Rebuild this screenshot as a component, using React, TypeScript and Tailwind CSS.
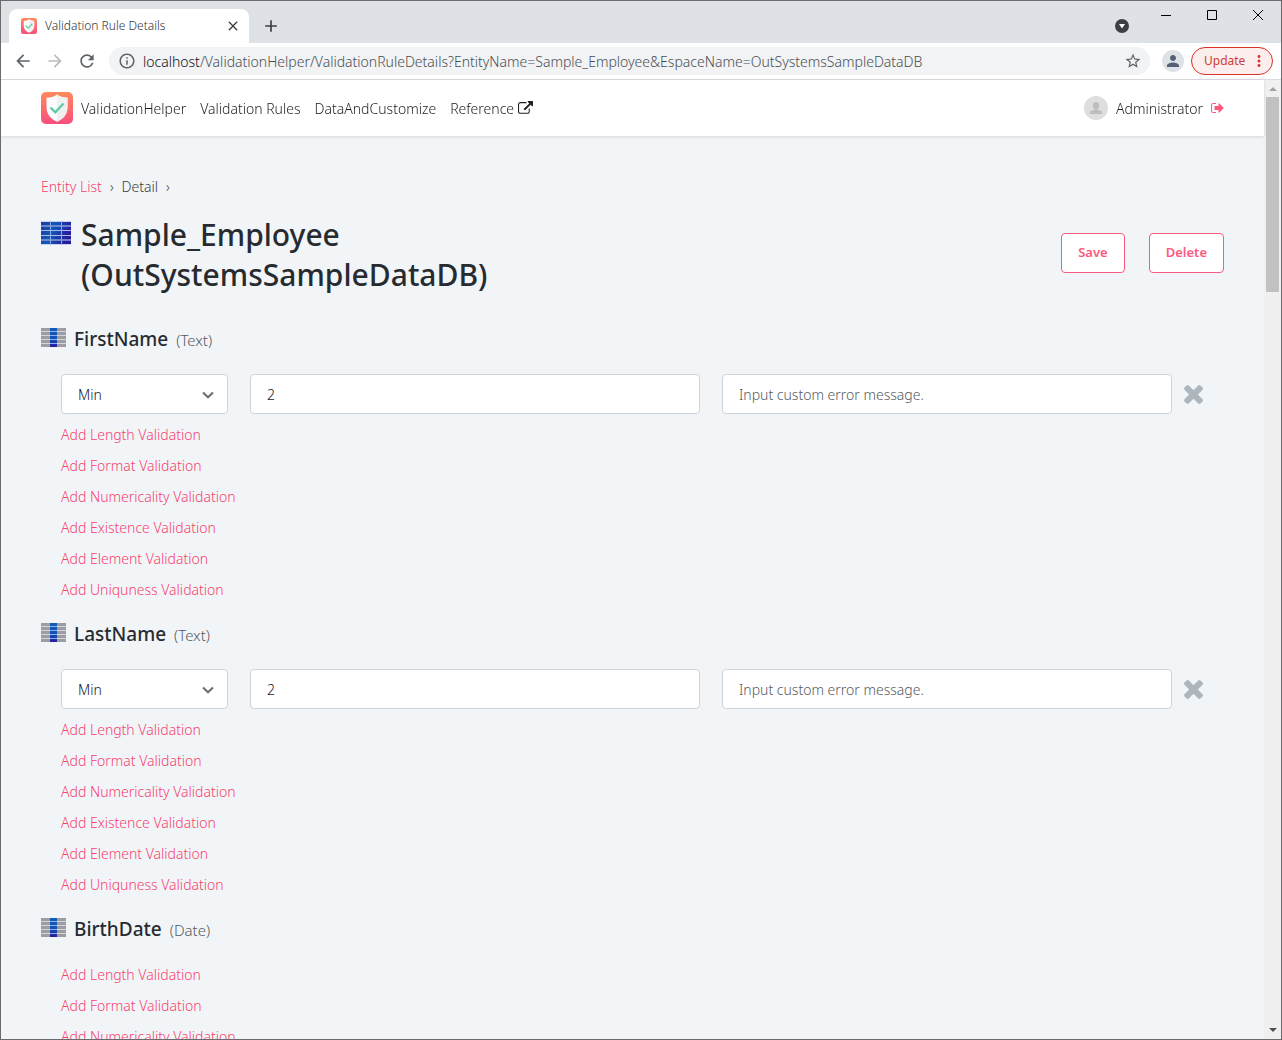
import type { ReactNode } from "react";
import { MdArrowBack, MdArrowForward, MdRefresh, MdInfoOutline, MdStarBorder, MdPerson, MdMoreVert, MdClose, MdAdd } from "react-icons/md";

const ADD_LINKS = ["Length", "Format", "Numericality", "Existence", "Element", "Uniquness"];

const ATTRIBUTES = [
  { name: "FirstName", type: "Text", hasRule: true },
  { name: "LastName", type: "Text", hasRule: true },
  { name: "BirthDate", type: "Date", hasRule: false },
];

function ShieldLogo({ id, className }: { id: string; className: string }) {
  return (
    <svg viewBox="0 0 32 32" className={className} aria-hidden="true">
      <defs>
        <linearGradient id={id} x1="0" y1="0" x2="0" y2="1">
          <stop offset="0" stopColor="#ff8a5c" />
          <stop offset="1" stopColor="#f74f7d" />
        </linearGradient>
      </defs>
      <rect width="32" height="32" rx="5" fill={`url(#${id})`} />
      <path d="M16 2.500C13 4.700 9.500 5.600 5.500 5.800V15c0 7 4 12 10.500 14.700C22.500 27 26.500 22 26.500 15V5.800C22.500 5.600 19 4.700 16 2.500z" fill="#fcfcfc" />
      <path d="M16 2.500v27.200C22.500 27 26.500 22 26.500 15V5.800C22.500 5.600 19 4.700 16 2.500z" fill="#f0f0f0" />
      <path d="M9.500 15.500l4.800 4.800L22.500 11.500" fill="none" stroke="#5fcbaa" strokeWidth="2.400" />
    </svg>
  );
}

function EntityIcon() {
  return (
    <svg viewBox="0 0 30 24" className="mt-[6px] h-6 w-[30px] shrink-0" aria-hidden="true">
      <defs>
        <linearGradient id="entity" x1="0" y1="0" x2="1" y2="0.3">
          <stop offset="0" stopColor="#2038a4" />
          <stop offset="0.45" stopColor="#0f58ba" />
          <stop offset="1" stopColor="#2a1a9c" />
        </linearGradient>
      </defs>
      <rect width="30" height="22" y="1" fill="url(#entity)" />
      <path d="M0 .500h30M0 23.500h30" stroke="#c9d3ea" />
      <path d="M0 5h30M0 19h30" stroke="#7d98d6" strokeWidth="2" opacity="0.8" />
      <path d="M0 9.500h30M0 14.500h30" stroke="#a9bde6" />
      <path d="M9.500 0v24M20.500 0v24" stroke="#8ea9de" />
    </svg>
  );
}

function AttributeIcon() {
  return (
    <svg viewBox="0 0 25 19" className="mt-[3px] h-[19px] w-[25px] shrink-0" aria-hidden="true">
      <defs>
        <linearGradient id="attribute" x1="0" y1="0" x2="0" y2="1">
          <stop offset="0" stopColor="#0f5cbc" />
          <stop offset="0.6" stopColor="#0f50b8" />
          <stop offset="1" stopColor="#2a1a9c" />
        </linearGradient>
      </defs>
      <rect width="25" height="19" fill="#9c9ca3" />
      <rect x="9" width="7" height="19" fill="url(#attribute)" />
      <path d="M0 3.500h9M0 7.500h9M0 11.500h9M0 15.500h9M16 3.500h9M16 7.500h9M16 11.500h9M16 15.500h9" stroke="#d4d6db" />
      <path d="M9 3.500h7M9 7.500h7M9 11.500h7M9 15.500h7" stroke="#8fb0e4" />
    </svg>
  );
}

function ExternalLinkIcon() {
  return (
    <svg viewBox="0 0 1792 1792" className="size-[15px]" fill="currentColor" aria-hidden="true">
      <path d="M1408 928v320q0 119-84.500 203.500t-203.500 84.500h-832q-119 0-203.500-84.500t-84.500-203.500v-832q0-119 84.500-203.500t203.500-84.500h704q14 0 23 9t9 23v64q0 14-9 23t-23 9h-704q-66 0-113 47t-47 113v832q0 66 47 113t113 47h832q66 0 113-47t47-113v-320q0-14 9-23t23-9h64q14 0 23 9t9 23zm384-864v512q0 26-19 45t-45 19-45-19l-176-176-652 652q-10 10-23 10t-23-10l-114-114q-10-10-10-23t10-23l652-652-176-176q-19-19-19-45t19-45 45-19h512q26 0 45 19t19 45z" />
    </svg>
  );
}

function SignOutIcon() {
  return (
    <svg viewBox="0 128 1664 1536" className="h-3 w-[13px]" fill="currentColor" aria-hidden="true">
      <path d="M640 1440v96h-352q-119 0-203.500-84.500t-84.500-203.500v-704q0-119 84.500-203.500t203.500-84.500h352v128h-352q-66 0-113 47t-47 113v704q0 66 47 113t113 47h352zm992-544q0 26-19 45l-544 544q-19 19-45 19t-45-19-19-45v-288h-448q-26 0-45-19t-19-45v-384q0-26 19-45t45-19h448v-288q0-26 19-45t45-19 45 19l544 544q19 19 19 45z" />
    </svg>
  );
}

function CrossIcon() {
  return (
    <svg viewBox="302 366 1188 1188" className="size-[19px]" fill="currentColor" aria-hidden="true">
      <path d="M1490 1322q0 40-28 68l-136 136q-28 28-68 28t-68-28l-294-294-294 294q-28 28-68 28t-68-28l-136-136q-28-28-28-68t28-68l294-294-294-294q-28-28-28-68t28-68l136-136q28-28 68-28t68 28l294 294 294-294q28-28 68-28t68 28l136 136q28 28 28 68t-28 68l-294 294 294 294q28 28 28 68z" />
    </svg>
  );
}

function TabStrip() {
  return (
    <div className="flex h-[42px] shrink-0 items-start bg-[#dee1e6]">
      <div className="mt-2 ml-2 flex h-[34px] w-60 items-center rounded-t-lg bg-white pr-2 pl-3">
        <ShieldLogo id="favicon" className="size-4" />
        <span className="ml-2 flex-1 text-[12px] text-[#303438]">Validation Rule Details</span>
        <button aria-label="Close tab" className="text-[#3c4043]">
          <MdClose className="size-4" />
        </button>
      </div>
      <button aria-label="New tab" className="mt-[15px] ml-3 text-[#3c4043]">
        <MdAdd className="size-5" />
      </button>
      <div className="ml-auto flex items-start text-black">
        <button aria-label="Search tabs" className="mt-[18px] mr-[14px]">
          <svg viewBox="0 0 14 14" className="size-[14px]">
            <circle cx="7" cy="7" r="7" fill="#3c4043" />
            <path d="M4 5h6L7 9.500z" fill="#fff" />
          </svg>
        </button>
        <button aria-label="Minimize" className="flex h-7 w-[46px] items-center justify-center">
          <svg viewBox="0 0 10 10" className="size-[10px]"><path d="M0 5.500h10" stroke="currentColor" /></svg>
        </button>
        <button aria-label="Maximize" className="flex h-7 w-[46px] items-center justify-center">
          <svg viewBox="0 0 10 10" className="size-[10px]"><path d="M.5.5h9v9h-9z" fill="none" stroke="currentColor" /></svg>
        </button>
        <button aria-label="Close window" className="flex h-7 w-[46px] items-center justify-center">
          <svg viewBox="0 0 10 10" className="size-[10px]"><path d="M0 0l10 10M10 0L0 10" stroke="currentColor" /></svg>
        </button>
      </div>
    </div>
  );
}

function Toolbar() {
  return (
    <div className="flex h-[37px] shrink-0 items-center border-b border-[#d9dbde] bg-white pr-2 pl-3 text-[#5f6368]">
      <button aria-label="Back"><MdArrowBack className="size-5" /></button>
      <button aria-label="Forward" className="ml-3 text-[#babcbe]"><MdArrowForward className="size-5" /></button>
      <button aria-label="Reload" className="ml-3"><MdRefresh className="size-5" /></button>
      <div className="ml-3 flex h-7 min-w-0 flex-1 items-center rounded-full bg-[#f1f3f4] pr-2 pl-[9px]">
        <MdInfoOutline className="size-[18px] shrink-0" />
        <span className="ml-[7px] min-w-0 flex-1 text-[14px] whitespace-nowrap text-[#4b4f54]">
          <span className="text-[#101114]">localhost</span>/ValidationHelper/ValidationRuleDetails?EntityName=Sample_Employee&amp;EspaceName=OutSystemsSampleDataDB
        </span>
        <button aria-label="Bookmark this page"><MdStarBorder className="size-[18px]" /></button>
      </div>
      <button aria-label="Profile" className="ml-3 flex size-[22px] items-center justify-center rounded-full bg-[#dee1e6] text-[#535f75]">
        <MdPerson className="size-[18px]" />
      </button>
      <button className="ml-[7px] flex h-7 w-[82px] items-center justify-between rounded-full border border-[#d93025] bg-[#fceeed] pr-1 pl-3 text-[12px] font-normal text-[#d03c33]">
        Update
        <MdMoreVert className="size-[18px]" />
      </button>
    </div>
  );
}

function AppHeader() {
  return (
    <header className="relative flex h-14 shrink-0 items-center bg-white px-10 text-[14px] text-[#1c1f23] shadow-[0_1px_3px_rgba(0,0,0,0.12)]">
      <ShieldLogo id="logo" className="size-8" />
      <nav className="ml-2 flex items-center gap-3.5">
        <a href="#home">ValidationHelper</a>
        <a href="#rules">Validation Rules</a>
        <a href="#data">DataAndCustomize</a>
        <a href="#reference" className="flex items-center gap-1">
          Reference <ExternalLinkIcon />
        </a>
      </nav>
      <div className="ml-auto flex items-center">
        <svg viewBox="0 0 24 24" className="size-6" aria-hidden="true">
          <circle cx="12" cy="12" r="12" fill="#dedede" />
          <path d="M12 6c2 0 3.200 1.500 3.200 3.400 0 1.600-.8 2.700-1.700 3.400v1l4.500 1.500V18H6v-2.700l4.500-1.500v-1c-.9-.7-1.700-1.800-1.700-3.400C8.800 7.500 10 6 12 6z" fill="#bdbdbd" />
        </svg>
        <span className="ml-2">Administrator</span>
        <a href="#logout" aria-label="Log out" className="ml-2 text-[#fe5780]"><SignOutIcon /></a>
      </div>
    </header>
  );
}

function OutlineButton({ children }: { children: ReactNode }) {
  return (
    <button className="h-10 rounded border border-[#fa5a80] bg-white px-4 text-[13px] font-semibold text-[#fa5a80]">
      {children}
    </button>
  );
}

function RuleRow({ attribute }: { attribute: string }) {
  const field = "h-10 min-w-0 flex-1 rounded border border-[#ced4da] bg-white px-4 text-[14px] text-[#16191c] placeholder:text-[#555b61]";
  return (
    <div className="mt-[21px] mb-[5px] flex items-center gap-[22px]">
      <div className="relative w-[167px] shrink-0">
        <select aria-label={`${attribute} rule`} className="block h-10 w-full appearance-none rounded border border-[#ced4da] bg-white px-4 text-[14px] text-[#16191c]">
          <option>Min</option>
          <option>Max</option>
        </select>
        <svg viewBox="0 0 12 8" className="pointer-events-none absolute top-[17px] right-[14px] h-2 w-3" aria-hidden="true">
          <path d="M1 1.500L6 6.300l5-4.800" fill="none" stroke="#6a7178" strokeWidth="2.200" />
        </svg>
      </div>
      <input aria-label={`${attribute} value`} defaultValue="2" className={field} />
      <input aria-label={`${attribute} error message`} placeholder="Input custom error message." className={field} />
      <button aria-label={`Remove ${attribute} rule`} className="-ml-[11px] flex w-[21px] justify-center text-[#adb5bd]"><CrossIcon /></button>
    </div>
  );
}

function AttributeSection({ name, type, hasRule }: { name: string; type: string; hasRule: boolean }) {
  return (
    <section className="mb-[15px]">
      <div className="flex h-7 items-start">
        <AttributeIcon />
        <h2 className="ml-2 text-[19px] leading-7 font-medium">{name}</h2>
        <span className="ml-2 text-[15px] leading-[30px] text-[#555b61]">({type})</span>
      </div>
      <div className="px-5">
        {hasRule ? <RuleRow attribute={name} /> : <div className="h-4" />}
        <ul className="text-[14px] leading-[31px] text-[#f8416d]">
          {ADD_LINKS.map((kind) => (
            <li key={kind}><a href={`#${name}-${kind}`}>Add {kind} Validation</a></li>
          ))}
        </ul>
      </div>
    </section>
  );
}

function ScrollBar() {
  return (
    <div className="flex w-[17px] shrink-0 flex-col items-center bg-[#f0f0f0]" aria-hidden="true">
      <svg viewBox="0 0 16 17" className="h-[17px] w-4"><path d="M4 11h8L8 7z" fill="#a3a3a3" /></svg>
      <div className="h-[195px] w-[13px] bg-[#c1c1c1]" />
      <svg viewBox="0 0 16 17" className="mt-auto h-[17px] w-4"><path d="M4 6h8L8 10z" fill="#505050" /></svg>
    </div>
  );
}

export default function App() {
  return (
    <div className="flex h-screen flex-col overflow-hidden border border-[#6b6b6e] bg-white font-['Noto_Sans',sans-serif] font-light">
      <TabStrip />
      <Toolbar />
      <div className="flex min-h-0 flex-1">
        <div className="flex min-w-0 flex-1 flex-col">
          <AppHeader />
          <main className="min-h-0 flex-1 overflow-y-auto bg-[#f1f5f8] px-10 pt-10 text-[#272b30] [scrollbar-width:none]">
            <nav aria-label="Breadcrumb" className="flex h-5 items-center gap-2 text-[14px] text-[#363c42]">
              <a href="#entities" className="text-[#f8416d]">Entity List</a>
              <span>›</span>
              <span>Detail</span>
              <span>›</span>
            </nav>
            <div className="mt-[19px] mb-[30px] flex items-start justify-between">
              <div className="flex items-start gap-[10px]">
                <EntityIcon />
                <h1 className="text-[30px] leading-10 font-medium">Sample_Employee<br />(OutSystemsSampleDataDB)</h1>
              </div>
              <div className="mt-[18px] flex gap-6">
                <OutlineButton>Save</OutlineButton>
                <OutlineButton>Delete</OutlineButton>
              </div>
            </div>
            {ATTRIBUTES.map((attribute) => (
              <AttributeSection key={attribute.name} {...attribute} />
            ))}
          </main>
        </div>
        <ScrollBar />
      </div>
    </div>
  );
}
